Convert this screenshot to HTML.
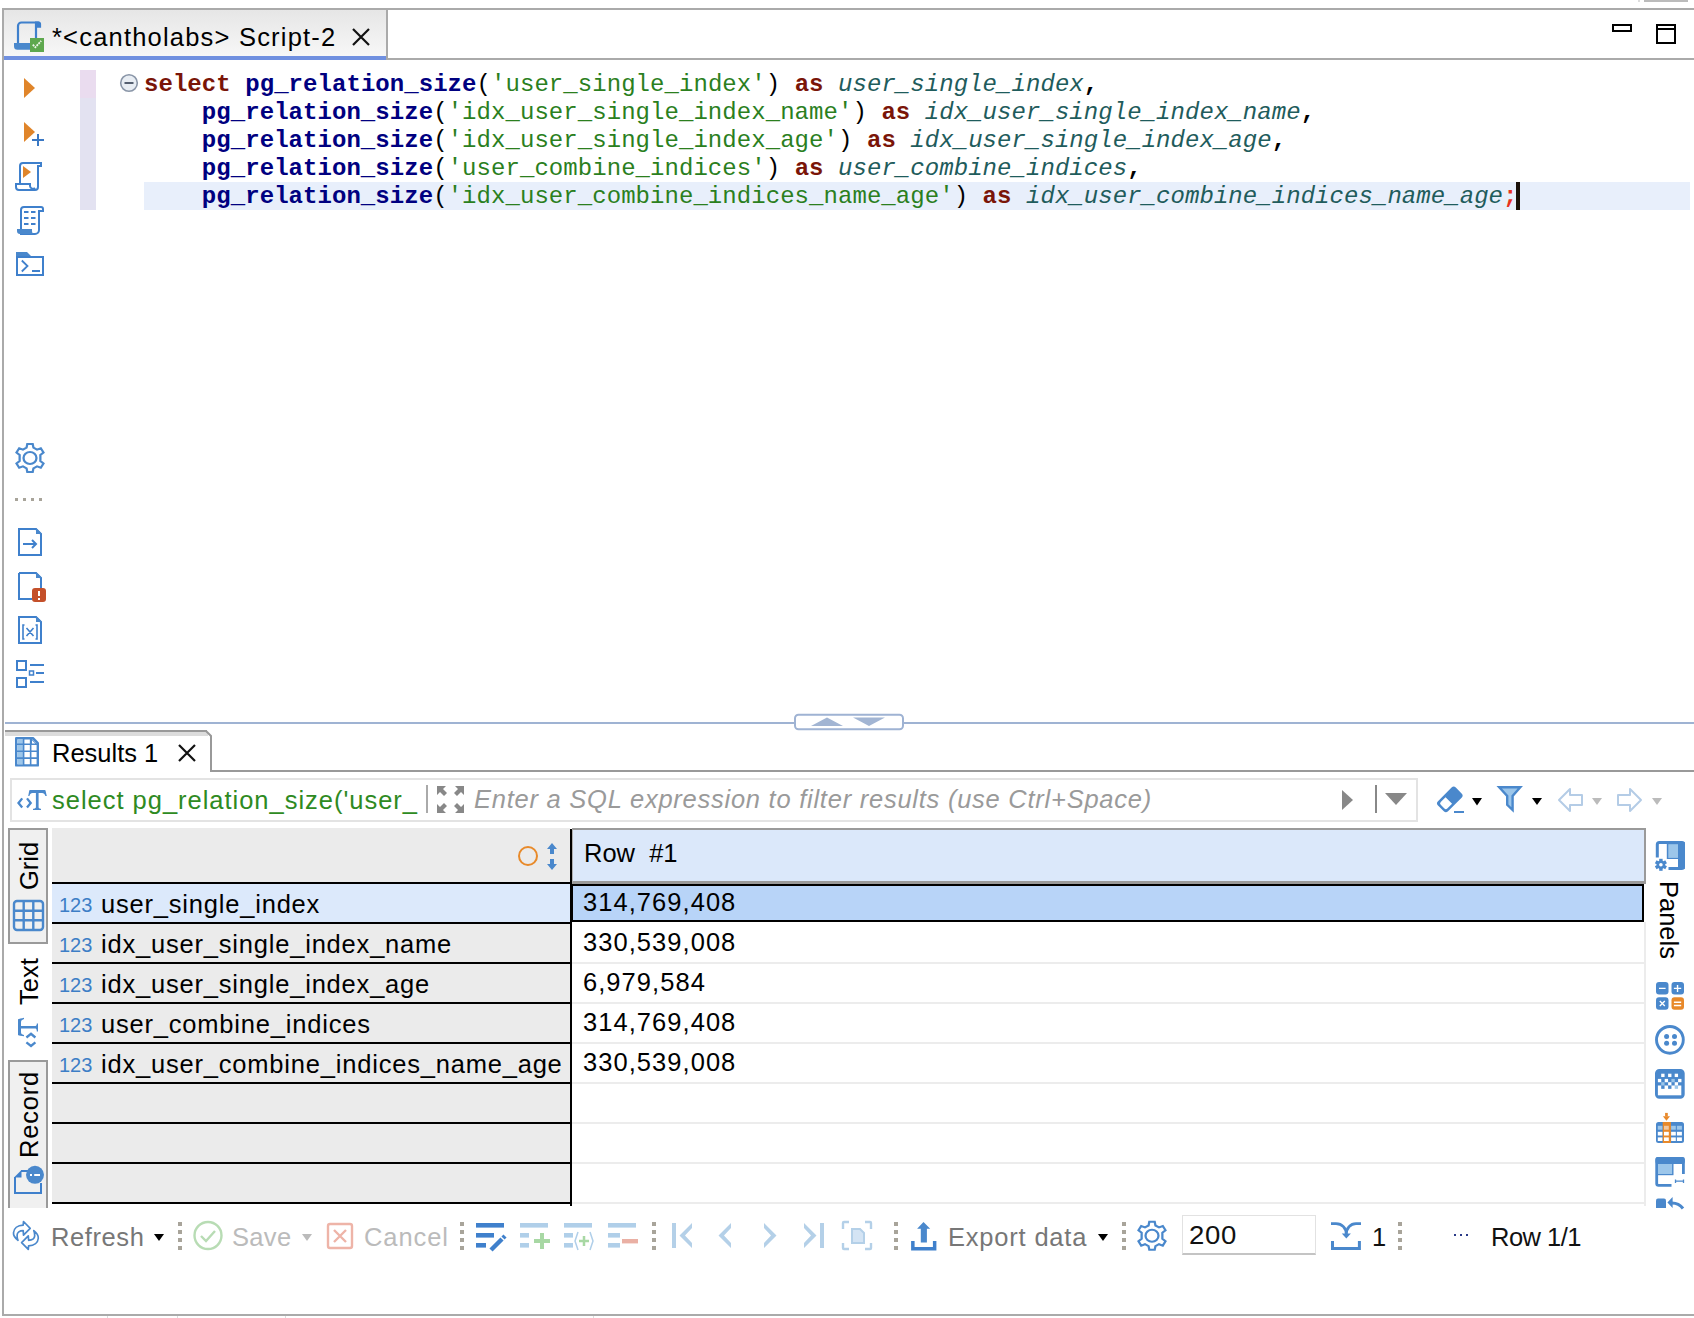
<!DOCTYPE html>
<html><head><meta charset="utf-8">
<style>
*{margin:0;padding:0;box-sizing:border-box}
html,body{width:1694px;height:1318px;overflow:hidden;background:#fff;font-family:"Liberation Sans",sans-serif;color:#000}
.a{position:absolute}
.ui{font-family:"Liberation Sans",sans-serif;white-space:nowrap;font-size:25.5px;line-height:30px}
.code{position:absolute;left:144px;letter-spacing:0.055px;font-family:"Liberation Mono",monospace;font-size:24px;white-space:pre;line-height:28px;height:28px}
.k{color:#7a1508;font-weight:bold}
.f{color:#000080;font-weight:bold}
.s{color:#2b7f1e}
.al{color:#1f5c5c;font-style:italic}
.cm{font-weight:bold}
.semi{color:#e8321e;font-weight:bold}
svg{position:absolute;overflow:visible}
.rn{letter-spacing:0.8px}
.rv{letter-spacing:1.05px}
.gl{position:absolute;background:#000}
</style></head><body>

<!-- ===== outer frame ===== -->
<div class="a" style="left:1638px;top:0;width:2px;height:2px;background:#ddd"></div>
<div class="a" style="left:1644px;top:0;width:44px;height:2px;background:#bbb"></div>
<div class="a" style="left:2px;top:8px;width:1692px;height:2px;background:#aaa"></div>
<div class="a" style="left:2px;top:8px;width:2px;height:1308px;background:#aaa"></div>
<div class="a" style="left:2px;top:1314px;width:1692px;height:2px;background:#aaa"></div>
<div class="a" style="left:107px;top:1316px;width:1px;height:2px;background:#ddd"></div><div class="a" style="left:177px;top:1316px;width:1px;height:2px;background:#ddd"></div><div class="a" style="left:285px;top:1316px;width:1px;height:2px;background:#ddd"></div><div class="a" style="left:593px;top:1316px;width:1px;height:2px;background:#ddd"></div>

<!-- ===== editor tab ===== -->
<div class="a" style="left:4px;top:10px;width:382px;height:46px;background:linear-gradient(#e6e6e6,#f7f7f7)"></div>
<div class="a" style="left:386px;top:10px;width:2px;height:50px;background:#aaa"></div>
<div class="a" style="left:4px;top:56px;width:382px;height:4px;background:#7090e0"></div>
<div class="a" style="left:388px;top:58px;width:1306px;height:2px;background:#aaa"></div>
<svg style="left:0;top:0" width="60" height="60">
 <path d="M18 44 V26 a3.5 3.5 0 0 1 3.5-3.5 H38.5 a1.5 1.5 0 0 1 1.5 1.5 V26.6 H37" fill="none" stroke="#3f80cc" stroke-width="2.2"/>
 <path d="M36 23 V38.5" stroke="#3f80cc" stroke-width="2.2"/>
 <path d="M35 21.4 H38.5 a1.8 1.8 0 0 1 1.8 1.8 V26.8 H35z" fill="#3f80cc"/>
 <path d="M14 43 H30 V49.8 H17.5 a3.5 3.5 0 0 1 -3.5-3.5z" fill="#4a88cc"/>
 <rect x="30" y="38" width="14" height="14" fill="#5ea84e"/>
 <path d="M32.8 44.6 L35.4 47.3 L41.2 40.8" fill="none" stroke="#eef6ea" stroke-width="1.8" stroke-dasharray="2 0.8"/>
</svg>
<div id="tabtxt" class="a ui" style="left:52px;top:22px;letter-spacing:1.2px">*&lt;cantholabs&gt; Script-2</div>
<svg style="left:0;top:0" width="400" height="60"><path d="M353 29 L369 45 M369 29 L353 45" stroke="#111" stroke-width="2.2"/></svg>
<!-- min/max -->
<svg style="left:0;top:0" width="1694" height="60">
 <rect x="1613" y="25" width="18" height="6" fill="none" stroke="#000" stroke-width="2"/>
 <rect x="1657" y="25" width="18" height="18" fill="none" stroke="#000" stroke-width="2"/>
 <path d="M1657 29 H1675" stroke="#000" stroke-width="2"/>
</svg>

<!-- ===== left editor toolbar ===== -->
<svg style="left:0;top:0" width="60" height="700">
 <path d="M24 78 L35 88 L24 98z" fill="#e0852a"/>
 <path d="M24 122 L35 132 L24 142z" fill="#e0852a"/>
 <path d="M32 140 H44 M38 134 V146" stroke="#3a78c4" stroke-width="2"/>
 <!-- script play -->
 <path d="M20 183 V166 a3 3 0 0 1 3-3 H41 V166 H38 V187 a3 3 0 0 1 -3 3 H19 a3 3 0 0 1 -3-3 V184 H30 v2 a3 3 0 0 0 5 2" fill="none" stroke="#3f80cc" stroke-width="2"/>
 <path d="M23 166 L31 172 L23 178z" fill="#e0852a"/>
 <!-- script lines -->
 <path d="M21 230 V210 a3 3 0 0 1 3-3 H41 a2 2 0 0 1 2 2 V211 H39 V230 a4 4 0 0 1 -4 4 H20" fill="none" stroke="#3f80cc" stroke-width="2"/>
 <path d="M17 229 H32 v2 a3 3 0 0 0 6 0 V233 a1 1 0 0 1 -1 1 H20 a3 3 0 0 1 -3-3z" fill="#4a88cc"/>
 <path d="M24 212 h4.5 M31 212 h4.5 M24 218 h4.5 M31 218 h4.5 M24 224 h4.5 M31 224 h4.5" stroke="#3f80cc" stroke-width="1.8"/>
 <!-- terminal folder -->
 <path d="M16 252 H27 L31 256 H44 V258 H16z" fill="#4a88cc"/>
 <rect x="17" y="257" width="26" height="18" fill="none" stroke="#3f80cc" stroke-width="2"/>
 <path d="M21.8 260.5 L27.5 266 L21.8 271.5 M32 271 H40" fill="none" stroke="#3f80cc" stroke-width="1.8"/>
 <!-- gear -->
 <g transform="translate(30 458) scale(1.08 1.0)" fill="none" stroke="#4a88cc" stroke-width="2.1">
  <path d="M-2.5 -14 H2.5 L3.2 -10.3 L6.5 -8.4 L10 -9.8 L12.5 -5.5 L9.6 -3 V3 L12.5 5.5 L10 9.8 L6.5 8.4 L3.2 10.3 L2.5 14 H-2.5 L-3.2 10.3 L-6.5 8.4 L-10 9.8 L-12.5 5.5 L-9.6 3 V-3 L-12.5 -5.5 L-10 -9.8 L-6.5 -8.4 L-3.2 -10.3z"/>
  <circle r="6"/>
 </g>
 <g fill="#a8a49a"><rect x="15" y="498" width="3" height="3"/><rect x="23" y="498" width="3" height="3"/><rect x="31" y="498" width="3" height="3"/><rect x="39" y="498" width="3" height="3"/></g>
 <!-- file arrow -->
 <path d="M19 529 H36 L41 534 V555 H19z" fill="none" stroke="#3f80cc" stroke-width="2"/>
 <path d="M36 528 L42 534 H36z" fill="#4a88cc"/>
 <path d="M23 544 H36 M32 540 L36 544 L32 548" fill="none" stroke="#3f80cc" stroke-width="2"/>
 <!-- file error -->
 <path d="M19 573 H36 L41 578 V590 M32 599 H19 V573" fill="none" stroke="#3f80cc" stroke-width="2"/>
 <path d="M36 572 L42 578 H36z" fill="#4a88cc"/>
 <rect x="32" y="588" width="14" height="14" rx="3" fill="#c4502a"/>
 <path d="M39 591 V596 M39 598 V600" stroke="#fff" stroke-width="2"/>
 <!-- file x -->
 <path d="M19 617 H36 L41 622 V643 H19z" fill="none" stroke="#3f80cc" stroke-width="2"/>
 <path d="M36 616 L42 622 H36z" fill="#4a88cc"/>
 <path d="M24.5 625 H23 V639 H24.5 M35.5 625 H37 V639 H35.5 M26.5 628 L33.5 636 M33.5 628 L26.5 636" fill="none" stroke="#3f80cc" stroke-width="1.6"/>
 <!-- checklist -->
 <rect x="17" y="661" width="9" height="9" fill="none" stroke="#3f80cc" stroke-width="2"/>
 <rect x="17" y="678" width="9" height="9" fill="none" stroke="#3f80cc" stroke-width="2"/>
 <rect x="29.5" y="671" width="4" height="4" fill="none" stroke="#3f80cc" stroke-width="1.5"/>
 <path d="M30 665 H44 M36 673 H44 M30 682 H44" stroke="#3f80cc" stroke-width="2"/>
</svg>

<!-- ===== code area ===== -->
<div class="a" style="left:80px;top:70px;width:16px;height:28px;background:#eadcef"></div>
<div class="a" style="left:80px;top:98px;width:16px;height:112px;background:#e3e2f1"></div>
<div class="a" style="left:144px;top:182px;width:1546px;height:28px;background:#e8effb"></div>
<svg style="left:0;top:0" width="200" height="100"><circle cx="129" cy="83" r="8.3" fill="#e8edf3" stroke="#8a96a8" stroke-width="1.6"/><path d="M124.5 83 H133.5" stroke="#555f70" stroke-width="2"/></svg>

<div class="code" style="top:71px"><span class="k">select</span> <span class="f">pg_relation_size</span>(<span class="s">'user_single_index'</span>) <span class="k">as</span> <span class="al">user_single_index</span><span class="cm">,</span></div>
<div class="code" style="top:99px">    <span class="f">pg_relation_size</span>(<span class="s">'idx_user_single_index_name'</span>) <span class="k">as</span> <span class="al">idx_user_single_index_name</span><span class="cm">,</span></div>
<div class="code" style="top:127px">    <span class="f">pg_relation_size</span>(<span class="s">'idx_user_single_index_age'</span>) <span class="k">as</span> <span class="al">idx_user_single_index_age</span><span class="cm">,</span></div>
<div class="code" style="top:155px">    <span class="f">pg_relation_size</span>(<span class="s">'user_combine_indices'</span>) <span class="k">as</span> <span class="al">user_combine_indices</span><span class="cm">,</span></div>
<div class="code" style="top:183px">    <span class="f">pg_relation_size</span>(<span class="s">'idx_user_combine_indices_name_age'</span>) <span class="k">as</span> <span class="al">idx_user_combine_indices_name_age</span><span class="semi">;</span></div>
<div class="a" style="left:1516px;top:182px;width:4px;height:28px;background:#1a1008"></div>

<!-- ===== splitter ===== -->
<div class="a" style="left:5px;top:722px;width:1689px;height:2px;background:#9fb3d3"></div>
<svg style="left:0;top:0" width="1000" height="740">
 <rect x="795" y="714.8" width="108" height="14.4" rx="3.5" fill="#fff" stroke="#9fb3d3" stroke-width="2"/>
 <path d="M811 726 L827 717.5 L843 726z M853 717.5 H885 L869 726z" fill="#a2b5d3"/>
</svg>

<!-- ===== results tab ===== -->
<div class="a" style="left:5px;top:730px;width:202px;height:2px;background:#999"></div>
<div class="a" style="left:5px;top:732px;width:203px;height:4px;background:#dcdcdc"></div>
<svg style="left:0;top:0" width="260" height="780">
 <path d="M206 731 L211 736 V771 H1694" fill="none" stroke="#999" stroke-width="2"/>
</svg>
<div class="a" style="left:212px;top:770px;width:1482px;height:2px;background:#999"></div>
<!-- results icon -->
<svg style="left:0;top:0" width="60" height="780">
 <path d="M16.2 738.2 H33 L37.8 743 V765.4 H16.2z" fill="#fff" stroke="#4a88cc" stroke-width="2.4" stroke-linejoin="round"/>
 <rect x="17.4" y="739.4" width="5.6" height="24.8" fill="#9cc6ea"/>
 <path d="M23.6 738 V766 M30.65 738 V766 M16 744.3 H38 M16 751.2 H38 M16 758.1 H38" stroke="#4a88cc" stroke-width="1.6"/>
 <path d="M30.5 737.5 L38 745 H30.5z" fill="#4a88cc"/>
 <path d="M32 740.2 L35.3 743.5 H32z" fill="#fff"/>
</svg>
<div id="restxt" class="a ui" style="left:52px;top:738px;letter-spacing:0px">Results 1</div>
<svg style="left:0;top:0" width="260" height="780"><path d="M179 745 L195 761 M195 745 L179 761" stroke="#111" stroke-width="2.2"/></svg>

<!-- ===== filter bar ===== -->
<div class="a" style="left:10px;top:778px;width:1408px;height:44px;border:2px solid #e3e3e3;background:#fff"></div>
<svg style="left:0;top:0" width="60" height="830">
 <path d="M22.2 798.4 L18.5 803 L22.2 807.4 M27 798.4 L30.7 803 L27 807.4" fill="none" stroke="#4a88cc" stroke-width="2.3"/>
 <path d="M28.2 796 C28.8 793.5 29 791 29.6 790 H45.2 C45.8 791 46.2 793.5 46.8 796 H45.4 C44.5 793.8 43.8 793 42 793 H38.6 V807.6 C38.9 808.6 40 808.8 41 808.8 V810 H33 V808.8 C34 808.8 35.5 808.6 35.9 807.6 V793 H32.6 C30.8 793 30.2 793.8 29.4 796z" fill="#4a88cc"/>
</svg>
<div class="a" style="left:52px;top:785px;width:366px;height:32px;overflow:hidden"><div id="filtxt" class="ui" style="color:#2e8a22;margin-top:0px;letter-spacing:0.98px">select pg_relation_size('user_</div></div>
<div class="a" style="left:426px;top:785px;width:2px;height:28px;background:#aaa"></div>
<svg style="left:0;top:0" width="480" height="830" fill="#888">
 <path d="M437 786 H446 L443 789 L447 793 L444 796 L440 792 L437 795z"/>
 <path d="M464 786 H455 L458 789 L454 793 L457 796 L461 792 L464 795z"/>
 <path d="M437 813 H446 L443 810 L447 806 L444 803 L440 807 L437 804z"/>
 <path d="M464 813 H455 L458 810 L454 806 L457 803 L461 807 L464 804z"/>
</svg>
<div id="phtxt" class="a ui" style="left:474px;top:784px;color:#9a9a9a;font-style:italic;letter-spacing:0.75px">Enter a SQL expression to filter results (use Ctrl+Space)</div>
<svg style="left:0;top:0" width="1694" height="830">
 <path d="M1342 790 L1353 800 L1342 810z" fill="#888"/>
 <path d="M1376 785 V813" stroke="#888" stroke-width="2"/>
 <path d="M1385 793 H1407 L1396 805z" fill="#888"/>
 <!-- eraser -->
 <g transform="translate(1449.8 799.4) rotate(-45)">
  <rect x="-12.6" y="-7.1" width="25.2" height="14.2" rx="3" fill="#4a88cc"/>
  <path d="M-1.4 -4.6 H-8.2 a2 2 0 0 0 -2 2 V2.6 a2 2 0 0 0 2 2 H-1.4z" fill="#fff"/>
 </g>
 <path d="M1454 812 H1464" stroke="#4a88cc" stroke-width="2"/>
 <path d="M1472 798 H1482 L1477 805.5z" fill="#000"/>
 <!-- funnel -->
 <path d="M1499.2 787.2 H1520.3 L1512.6 796 V810 L1507.2 804.8 V796z" fill="#9cc6ea" stroke="#4a88cc" stroke-width="2.4" stroke-linejoin="miter"/>
 <path d="M1532 798 H1542 L1537 805z" fill="#000"/>
 <!-- arrows -->
 <path d="M1559 800 L1570 789 V795 H1582 V805 H1570 V811z" fill="none" stroke="#b4cce6" stroke-width="2" stroke-linejoin="round"/>
 <path d="M1592 798 H1602 L1597 805z" fill="#bbb"/>
 <path d="M1641 800 L1630 789 V795 H1618 V805 H1630 V811z" fill="none" stroke="#b4cce6" stroke-width="2" stroke-linejoin="round"/>
 <path d="M1652 798 H1662 L1657 805z" fill="#bbb"/>
</svg>

<!-- ===== grid ===== -->
<!-- left vertical tabs -->
<div class="a" style="left:8px;top:828px;width:40px;height:116px;border:2px solid #9a9a9a;background:#f0f0f0"></div>
<div class="a" style="left:8px;top:1060px;width:40px;height:148px;border:2px solid #9a9a9a;border-bottom:none;background:#f0f0f0"></div>
<div id="gridtxt" class="a ui" style="left:14px;top:890px;transform:rotate(-90deg);transform-origin:0 0;">Grid</div>
<div id="texttxt" class="a ui" style="left:14px;top:1005px;transform:rotate(-90deg);transform-origin:0 0;">Text</div>
<div id="rectxt" class="a ui" style="left:14px;top:1158px;letter-spacing:0.8px;transform:rotate(-90deg);transform-origin:0 0;">Record</div>
<svg style="left:0;top:0" width="60" height="1210">
 <!-- grid icon -->
 <rect x="14" y="901" width="29" height="29" rx="3" fill="none" stroke="#4a88cc" stroke-width="2.4"/>
 <path d="M14 910.7 H43 M14 920.3 H43 M23.7 901 V930 M33.3 901 V930" stroke="#4a88cc" stroke-width="2.4"/>
 <!-- text icon -->
 <g transform="translate(-4.5 232) rotate(-90 32.5 800)"><path d="M22.2 798.4 L18.5 803 L22.2 807.4 M27 798.4 L30.7 803 L27 807.4" fill="none" stroke="#4a88cc" stroke-width="2.3"/>
 <path d="M28.2 796 C28.8 793.5 29 791 29.6 790 H45.2 C45.8 791 46.2 793.5 46.8 796 H45.4 C44.5 793.8 43.8 793 42 793 H38.6 V807.6 C38.9 808.6 40 808.8 41 808.8 V810 H33 V808.8 C34 808.8 35.5 808.6 35.9 807.6 V793 H32.6 C30.8 793 30.2 793.8 29.4 796z" fill="#4a88cc"/></g>
 <!-- record icon -->
 <path d="M15 1177 V1193 H41 V1183" fill="none" stroke="#3f80cc" stroke-width="2"/>
 <path d="M14 1177.5 L21.5 1170 V1177.5z" fill="#3f80cc"/>
 <path d="M21 1171 H28" stroke="#3f80cc" stroke-width="2"/>
 <circle cx="35" cy="1174.8" r="9" fill="#4a88cc"/>
 <rect x="30" y="1174" width="2" height="2" fill="#fff"/><rect x="34.2" y="1174" width="5.8" height="2" fill="#fff"/>
</svg>

<!-- header column -->
<div class="a" style="left:52px;top:828px;width:518px;height:376px;background:#ebebeb"></div>
<div class="a" style="left:52px;top:884px;width:518px;height:38px;background:#dce9fb"></div>
<div class="gl" style="left:52px;top:882px;width:520px;height:2px"></div>
<div class="gl" style="left:52px;top:922px;width:520px;height:2px"></div>
<div class="gl" style="left:52px;top:962px;width:520px;height:2px"></div>
<div class="gl" style="left:52px;top:1002px;width:520px;height:2px"></div>
<div class="gl" style="left:52px;top:1042px;width:520px;height:2px"></div>
<div class="gl" style="left:52px;top:1082px;width:520px;height:2px"></div>
<div class="gl" style="left:52px;top:1122px;width:520px;height:2px"></div>
<div class="gl" style="left:52px;top:1162px;width:520px;height:2px"></div>
<div class="gl" style="left:52px;top:1202px;width:520px;height:2px"></div>
<div class="gl" style="left:570px;top:829px;width:2px;height:377px"></div>

<!-- value column -->
<div class="a" style="left:572px;top:828px;width:1074px;height:56px;background:#dbe8fa;border:2px solid #9a9a9a;border-left:1px solid #b0b0b0;border-bottom-width:3px"></div>
<div class="a" style="left:572px;top:962px;width:1072px;height:2px;background:#ececec"></div>
<div class="a" style="left:572px;top:1002px;width:1072px;height:2px;background:#ececec"></div>
<div class="a" style="left:572px;top:1042px;width:1072px;height:2px;background:#ececec"></div>
<div class="a" style="left:572px;top:1082px;width:1072px;height:2px;background:#ececec"></div>
<div class="a" style="left:572px;top:1122px;width:1072px;height:2px;background:#ececec"></div>
<div class="a" style="left:572px;top:1162px;width:1072px;height:2px;background:#ececec"></div>
<div class="a" style="left:572px;top:1202px;width:1072px;height:2px;background:#ececec"></div>
<div class="a" style="left:1644px;top:922px;width:2px;height:284px;background:#ececec"></div>
<div class="a" style="left:570px;top:884px;width:1074px;height:38px;background:#b8d4f8;border:2px solid #000;border-left-width:3px"></div>

<svg style="left:0;top:0" width="600" height="900">
 <circle cx="528" cy="856" r="9" fill="none" stroke="#e88a2a" stroke-width="2"/>
 <path d="M552 843 L557 849 H554 V854 H550 V849 H547z M552 870 L557 864 H554 V859 H550 V864 H547z" fill="#4a88cc"/>
</svg>
<div id="rowhdr" class="a ui" style="left:584px;top:838px;white-space:pre">Row  #1</div>

<div class="a ui" style="left:59px;top:890px;font-size:20px;color:#3d7ec6">123</div>
<div class="a ui" style="left:59px;top:930px;font-size:20px;color:#3d7ec6">123</div>
<div class="a ui" style="left:59px;top:970px;font-size:20px;color:#3d7ec6">123</div>
<div class="a ui" style="left:59px;top:1010px;font-size:20px;color:#3d7ec6">123</div>
<div class="a ui" style="left:59px;top:1050px;font-size:20px;color:#3d7ec6">123</div>
<div id="n1" class="a ui rn" style="left:101px;top:889px">user_single_index</div>
<div id="n2" class="a ui rn" style="left:101px;top:929px">idx_user_single_index_name</div>
<div id="n3" class="a ui rn" style="left:101px;top:969px">idx_user_single_index_age</div>
<div id="n4" class="a ui rn" style="left:101px;top:1009px">user_combine_indices</div>
<div id="n5" class="a ui rn" style="left:101px;top:1049px">idx_user_combine_indices_name_age</div>
<div id="v1" class="a ui rv" style="left:583px;top:887px">314,769,408</div>
<div id="v2" class="a ui rv" style="left:583px;top:927px">330,539,008</div>
<div id="v3" class="a ui rv" style="left:583px;top:967px">6,979,584</div>
<div id="v4" class="a ui rv" style="left:583px;top:1007px">314,769,408</div>
<div id="v5" class="a ui rv" style="left:583px;top:1047px">330,539,008</div>

<!-- right panels -->
<div id="paneltxt" class="a ui" style="left:1684px;top:881px;transform:rotate(90deg);transform-origin:0 0;">Panels</div>
<svg style="left:0;top:0" width="1694" height="1210">
 <!-- panels icon -->
 <path d="M1657.3 857.5 V844.5 a2 2 0 0 1 2-2 H1682 a1.5 1.5 0 0 1 1.5 1.5 V866.5 a2 2 0 0 1 -2 2 H1668.5" fill="none" stroke="#4a88cc" stroke-width="3"/>
 <rect x="1678" y="842" width="6.8" height="27" fill="#4a88cc"/>
 <rect x="1666.8" y="843" width="11.5" height="16" fill="#4a88cc"/>
 <rect x="1668.3" y="844.2" width="9.7" height="13.7" fill="#9cc6ea"/>
 <g transform="translate(1660.9 864.8)" fill="#4a88cc">
  <circle r="4.3"/>
  <rect x="-1.7" y="-6" width="3.4" height="12"/>
  <rect x="-1.7" y="-6" width="3.4" height="12" transform="rotate(60)"/>
  <rect x="-1.7" y="-6" width="3.4" height="12" transform="rotate(120)"/>
  <circle r="1.8" fill="#fff"/>
 </g>
 <!-- calculator -->
 <rect x="1656" y="982" width="12.5" height="12.5" rx="3" fill="#4a88cc"/>
 <rect x="1671.5" y="982" width="12.5" height="12.5" rx="3" fill="#4a88cc"/>
 <rect x="1656" y="997.3" width="12.5" height="12.5" rx="3" fill="#4a88cc"/>
 <rect x="1671.5" y="997.3" width="12.5" height="12.5" rx="3" fill="#e8892a"/>
 <path d="M1659 988.4 H1665.6 M1673.9 988.4 H1681.2 M1677.55 984.9 V991.9 M1659.8 1001 L1664.8 1006 M1664.8 1001 L1659.8 1006 M1673.9 1002.3 H1681.2 M1673.9 1005.5 H1681.2" stroke="#fff" stroke-width="1.4"/>
 <!-- circle dots -->
 <circle cx="1669.9" cy="1039.85" r="13.4" fill="none" stroke="#4a88cc" stroke-width="2.9"/>
 <g fill="#4a88cc"><circle cx="1666.6" cy="1036.5" r="2.5"/><circle cx="1674.5" cy="1036.5" r="2.5"/><circle cx="1666.6" cy="1043.2" r="2.5"/><circle cx="1674.5" cy="1043.2" r="2.5"/></g>
 <!-- checker -->
 <rect x="1656.4" y="1070.3" width="26.9" height="27" rx="3" fill="#4a88cc" stroke="#4a88cc" stroke-width="2.8"/>
 <rect x="1657.9" y="1085.5" width="23.4" height="9.8" fill="#fff"/>
 <rect x="1661.2" y="1073.7" width="3.35" height="3.35" fill="#fff"/><rect x="1668.1" y="1073.7" width="3.35" height="3.35" fill="#fff"/><rect x="1674.7" y="1073.7" width="3.35" height="3.35" fill="#fff"/><rect x="1657.9" y="1078.9" width="3.35" height="3.35" fill="#fff"/><rect x="1664.7" y="1078.9" width="3.35" height="3.35" fill="#fff"/><rect x="1678.1" y="1078.9" width="3.35" height="3.35" fill="#fff"/><rect x="1671.4" y="1078.9" width="3.35" height="3.35" fill="#9cc6ea"/><rect x="1661.2" y="1082.2" width="3.35" height="3.35" fill="#9cc6ea"/><rect x="1668.1" y="1082.2" width="3.35" height="3.35" fill="#fff"/><rect x="1674.7" y="1082.2" width="3.35" height="3.35" fill="#fff"/><rect x="1661.2" y="1085.5" width="3.35" height="3.35" fill="#4a88cc"/><rect x="1668.1" y="1085.5" width="3.35" height="3.35" fill="#4a88cc"/><rect x="1674.7" y="1085.5" width="3.35" height="3.35" fill="#9cc6ea"/>
 <!-- column table -->
 <rect x="1656" y="1122" width="28" height="21" rx="2.5" fill="#4a88cc"/>
 <rect x="1662.7" y="1122" width="8.2" height="21" fill="#e8892a"/>
 <g fill="#9cc6ea"><rect x="1657.8" y="1125.8" width="4.6" height="3.9"/><rect x="1671.1" y="1125.8" width="4.7" height="3.9"/><rect x="1676.9" y="1125.8" width="5" height="3.9"/></g>
 <rect x="1664" y="1125.8" width="4.8" height="3.9" fill="#f2c8a0"/>
 <g fill="#fff"><rect x="1657.8" y="1131.8" width="4.6" height="3.7"/><rect x="1664" y="1131.8" width="4.8" height="3.7"/><rect x="1671.1" y="1131.8" width="4.7" height="3.7"/><rect x="1676.9" y="1131.8" width="5" height="3.7"/>
 <rect x="1657.8" y="1137.4" width="4.6" height="3.6"/><rect x="1664" y="1137.4" width="4.8" height="3.6"/><rect x="1671.1" y="1137.4" width="4.7" height="3.6"/><rect x="1676.9" y="1137.4" width="5" height="3.6"/></g>
 <rect x="1665.1" y="1112.9" width="2.7" height="3.6" fill="#e8892a"/>
 <path d="M1662.9 1116.2 H1670 L1666.45 1120.8z" fill="#e8892a"/>
 <!-- layout -->
 <path d="M1683.4 1174 V1160 a1.5 1.5 0 0 0 -1.5-1.5 H1658.5 a1.8 1.8 0 0 0 -1.8 1.8 V1183.5 a1.8 1.8 0 0 0 1.8 1.8 H1671.5" fill="none" stroke="#4a88cc" stroke-width="2.8"/>
 <rect x="1655.5" y="1157" width="29.3" height="7" rx="2" fill="#4a88cc"/>
 <rect x="1657.5" y="1163.5" width="16" height="11.7" fill="#4a88cc"/>
 <rect x="1658" y="1164" width="14.1" height="10" fill="#9cc6ea"/>
 <path d="M1675.5 1181.2 H1683.5 M1675.5 1179.5 V1183 M1683.5 1179.5 V1183" stroke="#4a88cc" stroke-width="1.3"/>
 <!-- partial -->
 <path d="M1656 1208 V1200.5 a2 2 0 0 1 2-2 H1664 a2 2 0 0 1 2 2 V1208z" fill="#4a88cc"/>
 <path d="M1667.4 1202.4 L1672.6 1197 V1208z" fill="#4a88cc"/>
 <path d="M1672 1203 C1676 1203 1680 1204.5 1683 1208.5" fill="none" stroke="#4a88cc" stroke-width="3"/>
</svg>

<!-- ===== bottom toolbar ===== -->
<svg style="left:0;top:0" width="1694" height="1318">
 <!-- refresh -->
 <g fill="none" stroke="#4a88cc" stroke-width="1.7" stroke-linejoin="round">
  <path d="M18 1240.3 C14.5 1237.5 13.3 1235 13.5 1232.7 C13.8 1228.5 17.5 1225.3 23.2 1225.1 L23.5 1221.5 L30.2 1228.3 L23.5 1235.1 L23.2 1230.6 C19.5 1230.6 17.2 1232.6 17.1 1235 C17 1237 17.4 1239 18 1240.3z"/>
  <path d="M18 1240.3 C14.5 1237.5 13.3 1235 13.5 1232.7 C13.8 1228.5 17.5 1225.3 23.2 1225.1 L23.5 1221.5 L30.2 1228.3 L23.5 1235.1 L23.2 1230.6 C19.5 1230.6 17.2 1232.6 17.1 1235 C17 1237 17.4 1239 18 1240.3z" transform="rotate(180 25.9 1235.45)"/>
 </g>
 <path d="M154 1234 H164 L159 1241z" fill="#000"/>
 <g fill="#a8a49a"><rect x="178" y="1222" width="4" height="4"/><rect x="178" y="1230" width="4" height="4"/><rect x="178" y="1238" width="4" height="4"/><rect x="178" y="1246" width="4" height="4"/></g>
 <!-- save -->
 <circle cx="208" cy="1235.5" r="13.5" fill="none" stroke="#b8dcb4" stroke-width="2.4"/>
 <path d="M201 1236 L206 1241 L215 1231" fill="none" stroke="#b8dcb4" stroke-width="2.4"/>
 <path d="M302 1234 H312 L307 1241z" fill="#bbb"/>
 <!-- cancel -->
 <rect x="328" y="1224" width="24" height="24" rx="2" fill="none" stroke="#eeb4a8" stroke-width="2.4"/>
 <path d="M334 1230 L346 1242 M346 1230 L334 1242" stroke="#eeb4a8" stroke-width="2.4"/>
 <g fill="#a8a49a"><rect x="460" y="1222" width="4" height="4"/><rect x="460" y="1230" width="4" height="4"/><rect x="460" y="1238" width="4" height="4"/><rect x="460" y="1246" width="4" height="4"/></g>
 <!-- edit -->
 <g fill="#3f80cc"><rect x="476" y="1223" width="28" height="4.6"/><rect x="476" y="1233" width="18" height="4.6"/><rect x="476" y="1243" width="10" height="4.6"/></g>
 <path d="M491 1250 L502 1239" stroke="#3f80cc" stroke-width="4.5"/>
 <path d="M503 1238 L505 1236" stroke="#3f80cc" stroke-width="4.5"/>
 <!-- add -->
 <g fill="#b0cfe9"><rect x="520" y="1223" width="28" height="4.6"/><rect x="520" y="1233" width="9" height="4.6"/><rect x="520" y="1243" width="9" height="4.6"/></g>
 <path d="M534 1241 H550 M542 1233 V1249" stroke="#a8d8a4" stroke-width="4"/>
 <!-- copy add -->
 <g fill="#b0cfe9"><rect x="564" y="1223" width="28" height="4.6"/><rect x="564" y="1233" width="9" height="4.6"/><rect x="564" y="1243" width="9" height="4.6"/></g>
 <path d="M578 1232 L575 1241 L578 1250 M590 1232 L593 1241 L590 1250" fill="none" stroke="#b0cfe9" stroke-width="1.5"/>
 <path d="M579 1241 H589 M584 1236 V1246" stroke="#a8d8a4" stroke-width="2.5"/>
 <!-- delete -->
 <g fill="#b0cfe9"><rect x="608" y="1223" width="28" height="4.6"/><rect x="608" y="1233" width="12" height="4.6"/><rect x="608" y="1243" width="12" height="4.6"/></g>
 <rect x="622" y="1239" width="16" height="4.4" fill="#eab0a4"/>
 <g fill="#a8a49a"><rect x="652" y="1222" width="4" height="4"/><rect x="652" y="1230" width="4" height="4"/><rect x="652" y="1238" width="4" height="4"/><rect x="652" y="1246" width="4" height="4"/></g>
 <!-- nav -->
 <g fill="#b4d0e8">
  <rect x="672" y="1223" width="4" height="25"/>
  <path d="M692 1223 V1228 L685 1235.5 L692 1243 V1248 L679.5 1235.5z"/>
  <path d="M731 1223 V1228 L724 1235.5 L731 1243 V1248 L718.5 1235.5z"/>
  <path d="M764 1223 V1228 L771 1235.5 L764 1243 V1248 L776.5 1235.5z"/>
  <path d="M804 1223 V1228 L811 1235.5 L804 1243 V1248 L816.5 1235.5z"/>
  <rect x="820" y="1223" width="4" height="25"/>
 </g>
 <!-- fullscreen -->
 <path d="M843 1229 V1223 a1 1 0 0 1 1-1 H849 M865 1222 H870 a1 1 0 0 1 1 1 V1229 M871 1243 V1248 a1 1 0 0 1 -1 1 H865 M849 1249 H844 a1 1 0 0 1 -1-1 V1243" fill="none" stroke="#b4d0e8" stroke-width="2.4"/>
 <path d="M852 1229 H860 L864 1233 V1243 H852z" fill="#d4e4f4" stroke="#b4d0e8" stroke-width="2"/>
 <g fill="#a8a49a"><rect x="894" y="1222" width="4" height="4"/><rect x="894" y="1230" width="4" height="4"/><rect x="894" y="1238" width="4" height="4"/><rect x="894" y="1246" width="4" height="4"/></g>
 <!-- export -->
 <path d="M912.85 1240.9 V1248.85 H934.65 V1240.9" fill="none" stroke="#3f80cc" stroke-width="3.5"/>
 <path d="M923.5 1222.1 L930.2 1228.7 H926.9 V1242.4 H920.8 V1228.7 H917.1z" fill="#4a88cc"/>
 <path d="M1098 1234 H1108 L1103 1241z" fill="#000"/>
 <g fill="#a8a49a"><rect x="1122" y="1222" width="4" height="4"/><rect x="1122" y="1230" width="4" height="4"/><rect x="1122" y="1238" width="4" height="4"/><rect x="1122" y="1246" width="4" height="4"/></g>
 <!-- gear -->
 <g transform="translate(1152 1235.8) scale(1.08 1.0)" fill="none" stroke="#4a88cc" stroke-width="2.1">
  <path d="M-2.5 -14 H2.5 L3.2 -10.3 L6.5 -8.4 L10 -9.8 L12.5 -5.5 L9.6 -3 V3 L12.5 5.5 L10 9.8 L6.5 8.4 L3.2 10.3 L2.5 14 H-2.5 L-3.2 10.3 L-6.5 8.4 L-10 9.8 L-12.5 5.5 L-9.6 3 V-3 L-12.5 -5.5 L-10 -9.8 L-6.5 -8.4 L-3.2 -10.3z"/>
  <circle r="6"/>
 </g>
 <!-- fetch -->
 <path d="M1332.5 1240.9 V1248.4 H1359.4 V1240.9" fill="none" stroke="#4a88cc" stroke-width="3"/>
 <path d="M1331 1223.6 H1336 C1342 1223.6 1346.3 1228 1346.3 1234.5 C1346.3 1228 1350.6 1223.6 1356 1223.6 H1361" fill="none" stroke="#4a88cc" stroke-width="2.8"/>
 <path d="M1341.8 1233.6 H1350.9 L1346.3 1238.5z" fill="#4a88cc"/>
 <g fill="#a8a49a"><rect x="1398" y="1222" width="4" height="4"/><rect x="1398" y="1230" width="4" height="4"/><rect x="1398" y="1238" width="4" height="4"/><rect x="1398" y="1246" width="4" height="4"/></g>
 <g fill="#2a3a88"><rect x="1454" y="1234" width="2" height="2"/><rect x="1460" y="1234" width="2" height="2"/><rect x="1466" y="1234" width="2" height="2"/></g>
</svg>
<div id="reftxt" class="a ui" style="left:51px;top:1222px;color:#777;letter-spacing:0.6px">Refresh</div>
<div id="savetxt" class="a ui" style="left:232px;top:1222px;color:#bbb;letter-spacing:0.33px">Save</div>
<div id="canctxt" class="a ui" style="left:364px;top:1222px;color:#bbb;letter-spacing:0.9px">Cancel</div>
<div id="exptxt" class="a ui" style="left:948px;top:1222px;color:#777;letter-spacing:0.8px">Export data</div>
<div class="a" style="left:1182px;top:1215px;width:134px;height:40px;background:#fff;border:1px solid #e2e2e2;border-bottom:2px solid #c4c4c4"></div>
<div id="t200" class="a ui" style="left:1189px;top:1220px;color:#111;letter-spacing:0.6px;transform:scaleX(1.08);transform-origin:0 0">200</div>
<div id="t1" class="a ui" style="left:1372px;top:1222px;color:#111">1</div>
<div id="rowtxt" class="a ui" style="left:1491px;top:1222px;color:#111;letter-spacing:-0.5px">Row 1/1</div>

<!-- BODY-REST -->
</body></html>
